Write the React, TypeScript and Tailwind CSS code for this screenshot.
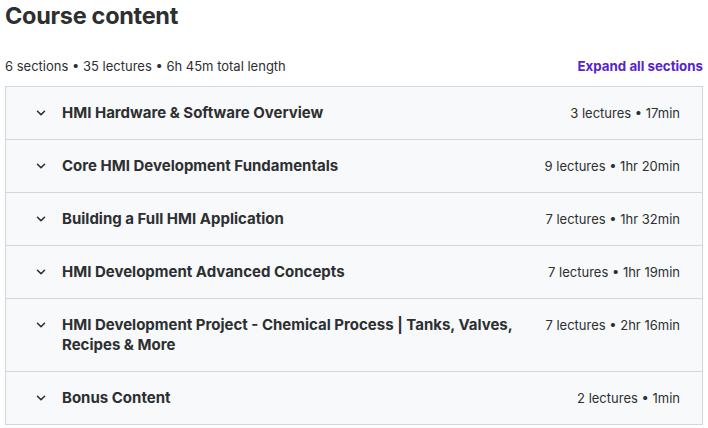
import { ChevronDown } from "lucide-react";

const sections = [
  { title: "HMI Hardware & Software Overview", meta: "3 lectures • 17min" },
  { title: "Core HMI Development Fundamentals", meta: "9 lectures • 1hr 20min" },
  { title: "Building a Full HMI Application", meta: "7 lectures • 1hr 32min" },
  { title: "HMI Development Advanced Concepts", meta: "7 lectures • 1hr 19min" },
  {
    title: "HMI Development Project - Chemical Process | Tanks, Valves, Recipes & More",
    meta: "7 lectures • 2hr 16min",
  },
  { title: "Bonus Content", meta: "2 lectures • 1min" },
];

export default function App() {
  return (
    <div
      className="min-h-screen bg-white px-[5px] pt-[2px] text-[#2d2f31]"
      style={{ fontFamily: "Inter, 'Liberation Sans', sans-serif" }}
    >
      <h2 className="text-[23.5px] font-bold leading-[28px] tracking-[-0.3px]">Course content</h2>

      <div className="mt-[26px] flex items-center justify-between pb-[10px] text-[13px] leading-[20px]">
        <span>6 sections • 35 lectures • 6h 45m total length</span>
        <button className="text-[13.3px] font-bold text-[#5624d0]">Expand all sections</button>
      </div>

      <div className="border border-[#d1d7dc]">
        {sections.map((s, i) => (
          <div
            key={s.title}
            className={`flex items-start bg-[#f7f9fa] py-[16px] pl-[28px] pr-[22px] ${
              i > 0 ? "border-t border-[#d1d7dc]" : ""
            }`}
          >
            <ChevronDown className="mt-[3px] h-[14px] w-[14px] shrink-0" strokeWidth={2.75} />
            <div className="ml-[14px] flex-1 pr-[22px] text-[15px] font-bold leading-[20px]">
              {s.title}
            </div>
            <div className="shrink-0 text-[13px] leading-[20px]">{s.meta}</div>
          </div>
        ))}
      </div>
    </div>
  );
}
